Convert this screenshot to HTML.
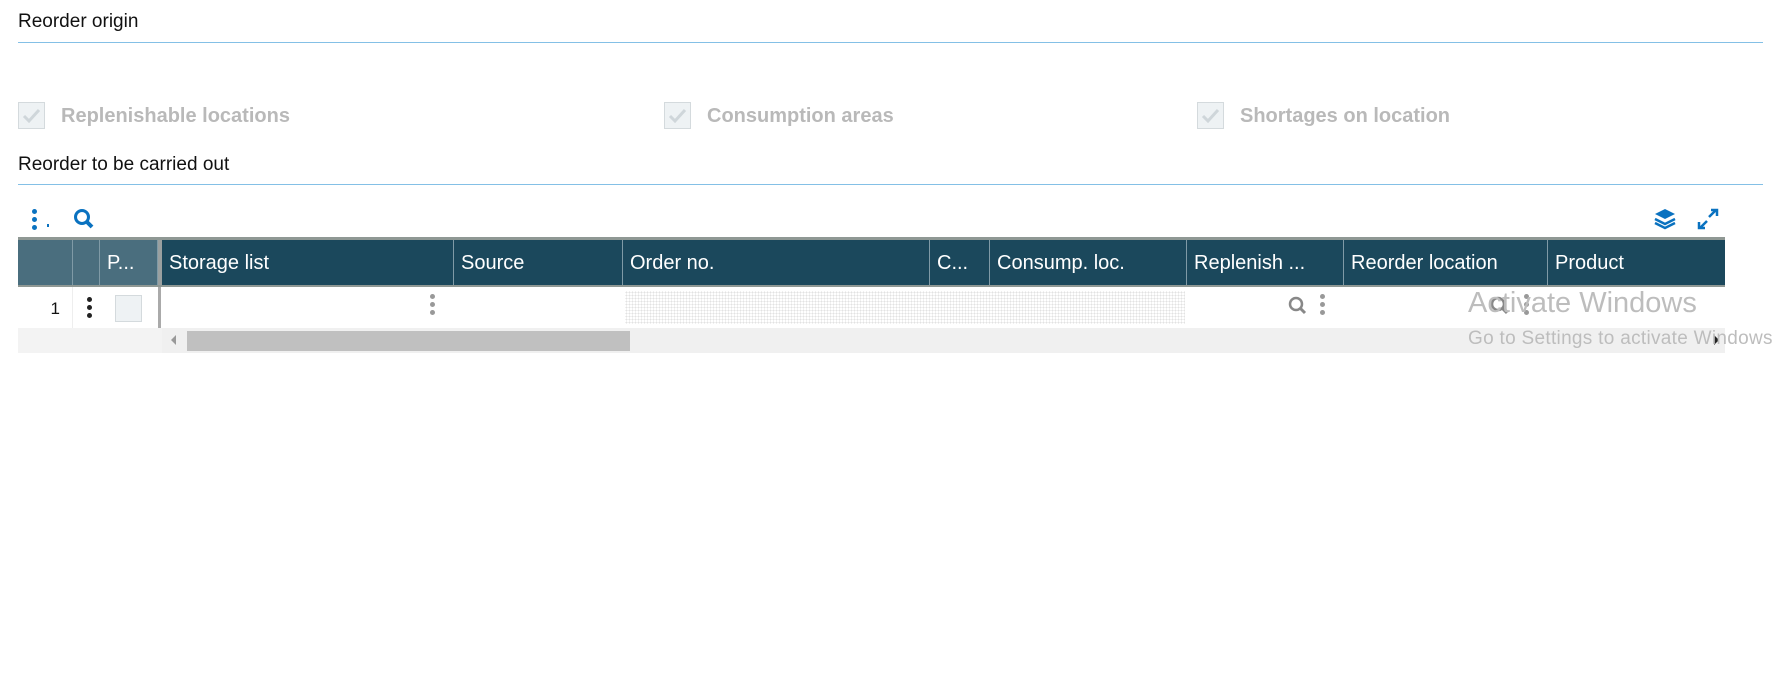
<!DOCTYPE html>
<html><head><meta charset="utf-8"><style>
*{margin:0;padding:0;box-sizing:border-box}
body{width:1774px;height:692px;background:#fff;font-family:"Liberation Sans",sans-serif;position:relative;overflow:hidden}
.a{position:absolute}
.t{font-size:19px;color:#111}
.line{height:1px;background:#84c0e6}
.cb{width:27px;height:27px;border:1px solid #d4dadd;background:#eef2f4}
.lbl{font-size:20px;font-weight:bold;color:#b9b9b9}
.hd{top:240px;height:45px;color:#fff;font-size:20px;line-height:47px;padding-left:7px;white-space:nowrap;overflow:hidden;border-right:1px solid #7f9aa6}
.dk{background:#1b485c}
.lt{background:#4a6e7e}
.dots{width:5px}
.dots i{display:block;width:5px;height:5px;border-radius:50%;margin-bottom:3px}
</style></head><body>
<div class="a t" style="left:18px;top:11px">Reorder origin</div>
<div class="a line" style="left:18px;top:42px;width:1745px"></div>

<div class="a cb" style="left:18px;top:102px"></div>
<svg class="a" style="left:21px;top:107px" width="22" height="18"><path d="M3 9 L8 14 L18 3" stroke="#cfd6da" stroke-width="3" fill="none"/></svg>
<div class="a lbl" style="left:61px;top:105px">Replenishable locations</div>
<div class="a cb" style="left:664px;top:102px"></div>
<svg class="a" style="left:667px;top:107px" width="22" height="18"><path d="M3 9 L8 14 L18 3" stroke="#cfd6da" stroke-width="3" fill="none"/></svg>
<div class="a lbl" style="left:707px;top:105px">Consumption areas</div>
<div class="a cb" style="left:1197px;top:102px"></div>
<svg class="a" style="left:1200px;top:107px" width="22" height="18"><path d="M3 9 L8 14 L18 3" stroke="#cfd6da" stroke-width="3" fill="none"/></svg>
<div class="a lbl" style="left:1240px;top:105px">Shortages on location</div>

<div class="a t" style="left:18px;top:154px">Reorder to be carried out</div>
<div class="a line" style="left:18px;top:184px;width:1745px"></div>

<div class="a dots" style="left:32px;top:209px"><i style="background:#0a72c0"></i><i style="background:#0a72c0"></i><i style="background:#0a72c0"></i></div>
<div class="a" style="left:47px;top:224px;width:2px;height:3px;background:#0a72c0"></div>
<svg class="a" style="left:73px;top:208px" width="22" height="22"><circle cx="9" cy="9" r="6.5" stroke="#0a72c0" stroke-width="3" fill="none"/><path d="M13 13 L19 19" stroke="#0a72c0" stroke-width="4"/></svg>
<svg class="a" style="left:1653px;top:208px" width="24" height="22"><path d="M12 1 L22 6 L12 11 L2 6Z" fill="#0a72c0"/><path d="M2 11 L12 16 L22 11" stroke="#0a72c0" stroke-width="2.5" fill="none"/><path d="M2 15 L12 20 L22 15" stroke="#0a72c0" stroke-width="2.5" fill="none"/></svg>
<svg class="a" style="left:1697px;top:208px" width="22" height="22"><path d="M12 9 L19 2 M14 2 L20 2 L20 8" stroke="#0a72c0" stroke-width="2.5" fill="none"/><path d="M10 13 L3 20 M2 14 L2 20 L8 20" stroke="#0a72c0" stroke-width="2.5" fill="none"/></svg>

<div class="a" style="left:18px;top:237px;width:1707px;height:3px;background:#8f9894"></div>
<div class="a hd lt" style="left:18px;width:55px"></div>
<div class="a hd lt" style="left:73px;width:27px"></div>
<div class="a hd lt" style="left:100px;width:58px">P...</div>
<div class="a" style="left:158px;top:240px;width:4px;height:45px;background:#9aa0a0"></div>
<div class="a hd dk" style="left:162px;width:292px">Storage list</div>
<div class="a hd dk" style="left:454px;width:169px">Source</div>
<div class="a hd dk" style="left:623px;width:307px">Order no.</div>
<div class="a hd dk" style="left:930px;width:60px">C...</div>
<div class="a hd dk" style="left:990px;width:197px">Consump. loc.</div>
<div class="a hd dk" style="left:1187px;width:157px">Replenish ...</div>
<div class="a hd dk" style="left:1344px;width:204px">Reorder location</div>
<div class="a hd dk" style="left:1548px;width:177px;border-right:none">Product</div>
<div class="a" style="left:18px;top:285px;width:1707px;height:2px;background:#8f9894"></div>

<div class="a" style="left:18px;top:288px;width:54px;height:41px;text-align:right;padding-right:12px;font-size:17px;line-height:41px;color:#111">1</div>
<div class="a" style="left:72px;top:287px;width:1px;height:41px;background:#eee"></div>
<div class="a dots" style="left:87px;top:297px"><i style="background:#222"></i><i style="background:#222"></i><i style="background:#222"></i></div>
<div class="a" style="left:115px;top:295px;width:27px;height:27px;border:1px solid #d4dadd;background:#eef2f4"></div>
<div class="a" style="left:158px;top:287px;width:3px;height:41px;background:#aaa"></div>
<div class="a dots" style="left:430px;top:294px"><i style="background:#999"></i><i style="background:#999"></i><i style="background:#999"></i></div>
<div class="a" style="left:625px;top:291px;width:560px;height:33px;background-image:radial-gradient(#e2e2e2 0.8px,transparent 0.9px);background-size:3px 3px"></div>
<svg class="a" style="left:1288px;top:296px" width="20" height="20"><circle cx="8" cy="8" r="6" stroke="#888" stroke-width="2.5" fill="none"/><path d="M12 12 L17 17" stroke="#888" stroke-width="3"/></svg>
<div class="a dots" style="left:1320px;top:294px"><i style="background:#999"></i><i style="background:#999"></i><i style="background:#999"></i></div>
<svg class="a" style="left:1490px;top:296px" width="20" height="20"><circle cx="8" cy="8" r="6" stroke="#888" stroke-width="2.5" fill="none"/><path d="M12 12 L17 17" stroke="#888" stroke-width="3"/></svg>
<div class="a dots" style="left:1524px;top:294px"><i style="background:#999"></i><i style="background:#999"></i><i style="background:#999"></i></div>

<div class="a" style="left:18px;top:328px;width:1707px;height:25px;background:#f0f0f0"></div>
<div class="a" style="left:18px;top:328px;width:144px;height:25px;background:#f3f3f3"></div>
<svg class="a" style="left:170px;top:334px" width="8" height="12"><path d="M6 1 L1 6 L6 11Z" fill="#999"/></svg>
<svg class="a" style="left:1712px;top:334px" width="8" height="12"><path d="M2 1 L7 6 L2 11Z" fill="#222"/></svg>
<div class="a" style="left:187px;top:331px;width:443px;height:20px;background:#c0c0c0"></div>

<div class="a" style="left:1468px;top:287px;font-size:29px;color:#bdbdbd;white-space:nowrap">Activate Windows</div>
<div class="a" style="left:1468px;top:328px;font-size:19px;color:#bdbdbd;white-space:nowrap;letter-spacing:0.3px">Go to Settings to activate Windows.</div>
</body></html>
